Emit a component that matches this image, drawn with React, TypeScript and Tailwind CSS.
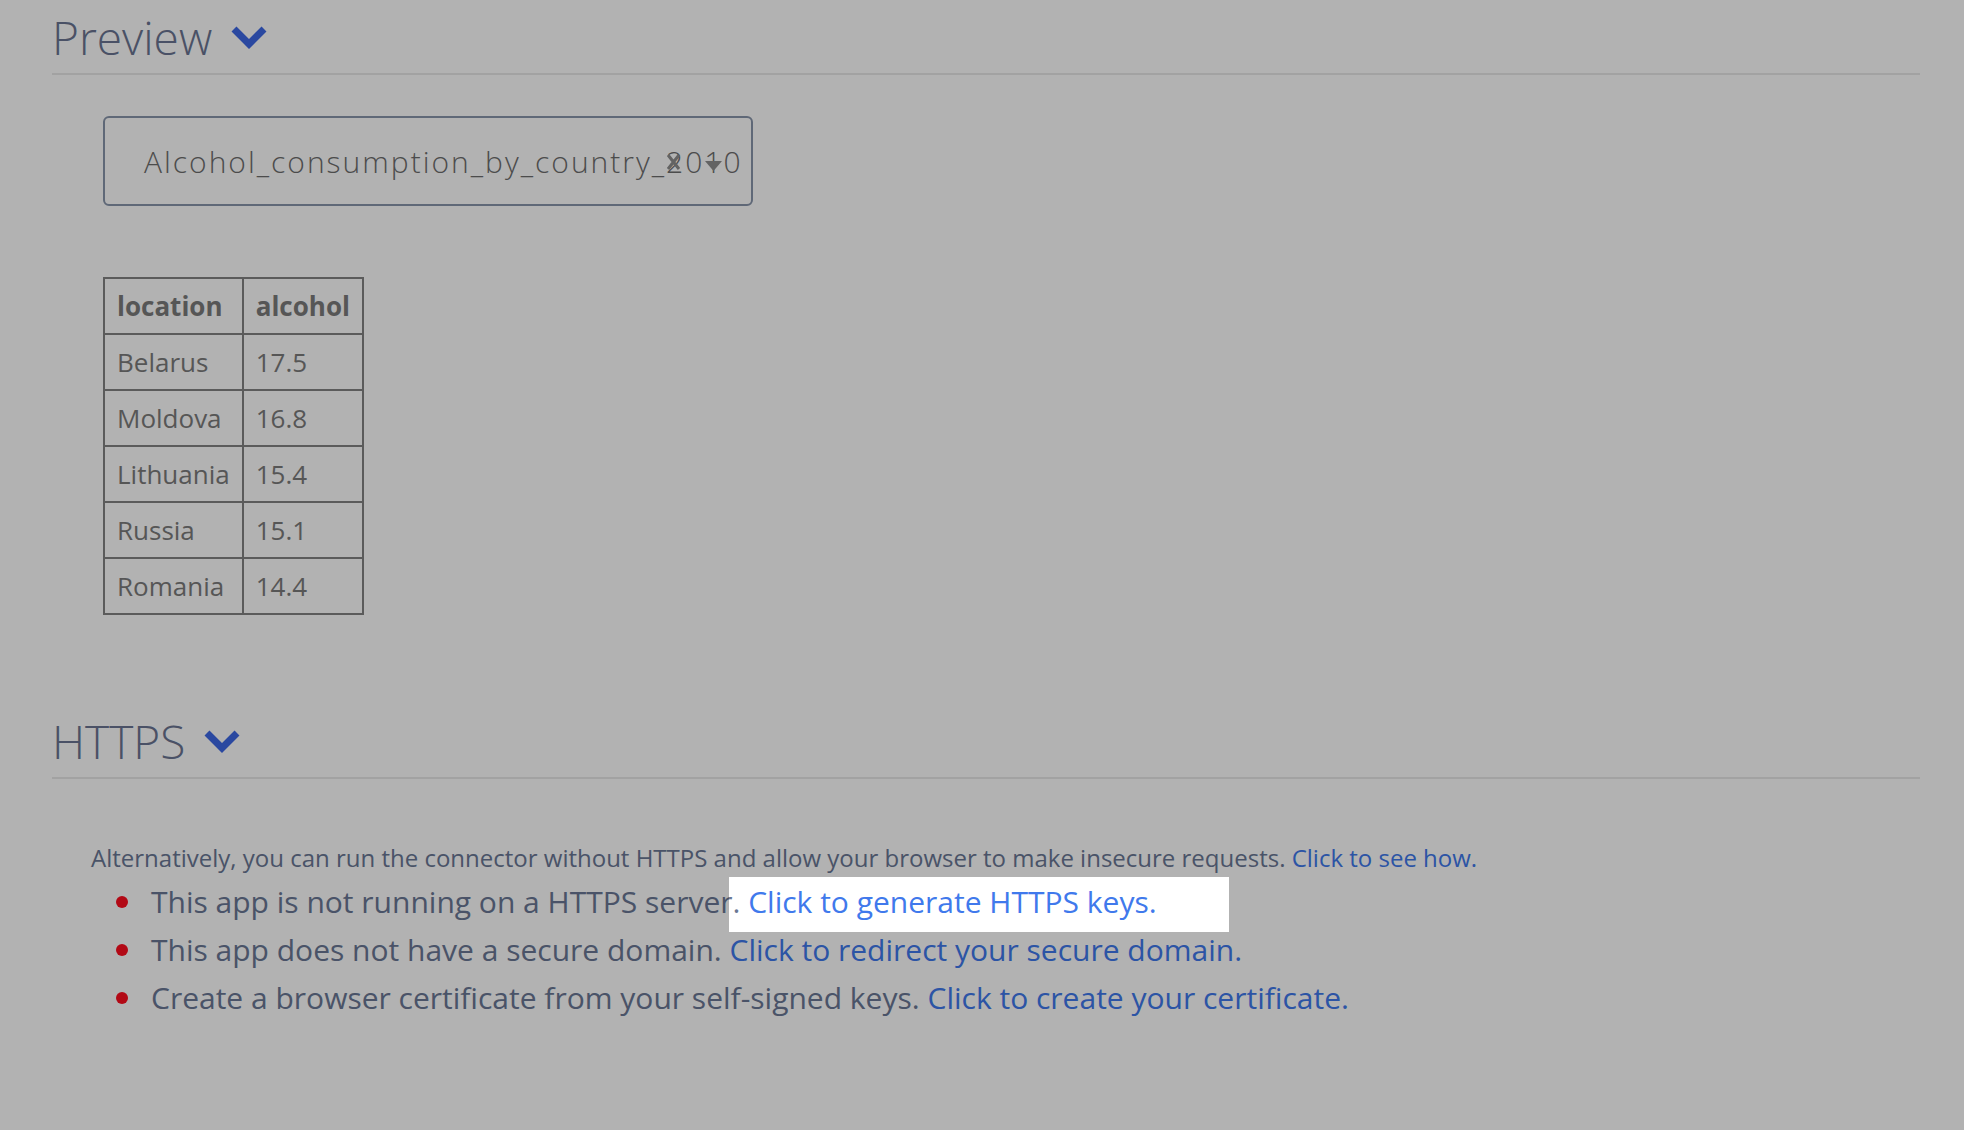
import React from "react";

const rows = [
  ["Belarus", "17.5"],
  ["Moldova", "16.8"],
  ["Lithuania", "15.4"],
  ["Russia", "15.1"],
  ["Romania", "14.4"],
];

const Chevron = () => (
  <svg width="36" height="24" viewBox="0 0 36 24" className="shrink-0">
    <polyline
      points="3,4 18,19 33,4"
      fill="none"
      stroke="#3d67e5"
      strokeWidth="7"
      strokeLinejoin="miter"
    />
  </svg>
);

const SectionTitle = ({ title }: { title: string }) => (
  <div className="border-b-2 border-[#e9e9e9] pb-[12px]">
    <h2 className="flex items-center gap-[19px] text-[46px] font-light leading-[48px] text-[#6a7592]">
      {title}
      <Chevron />
    </h2>
  </div>
);

const App = () => {
  return (
    <div className="min-h-[1130px] bg-white font-['Open_Sans',sans-serif] pl-[52px] pr-[44px] pt-[13px]">
      <SectionTitle title="Preview" />

      <div className="pl-[51px] pt-[41px]">
        <div className="relative h-[90px] w-[650px] rounded-[6px] border-2 border-[#8895ab] pl-[39px] flex items-center overflow-hidden">
          <span className="whitespace-nowrap text-[30px] font-light tracking-[2px] text-[#6e6e6e]">
            Alcohol_consumption_by_country_2010
          </span>
          <svg
            className="absolute left-[561px] top-[35px]"
            width="15"
            height="18"
            viewBox="0 0 15 18"
          >
            <path d="M2 2 L13 16 M13 2 L2 16" stroke="#8e8e8e" strokeWidth="3" />
          </svg>
          <svg
            className="absolute left-[600px] top-[43px]"
            width="17"
            height="10"
            viewBox="0 0 17 10"
          >
            <polygon points="0,0 17,0 8.5,10" fill="#8e8e8e" />
          </svg>
        </div>

        <table className="mt-[71px] border-collapse text-[26px] text-[#7c7c7c]">
          <thead>
            <tr>
              <th className="h-[56px] border-2 border-[#838383] px-[12px] text-left font-bold">
                location
              </th>
              <th className="h-[56px] border-2 border-[#838383] px-[12px] text-left font-bold">
                alcohol
              </th>
            </tr>
          </thead>
          <tbody>
            {rows.map((r) => (
              <tr key={r[0]}>
                <td className="h-[56px] border-2 border-[#838383] px-[12px]">{r[0]}</td>
                <td className="h-[56px] border-2 border-[#838383] px-[12px]">{r[1]}</td>
              </tr>
            ))}
          </tbody>
        </table>
      </div>

      <div className="pt-[102px]">
        <SectionTitle title="HTTPS" />
      </div>

      <div className="pl-[39px] pt-[63px] text-[#6a7895]">
        <p className="text-[24px] leading-[32px]">
          Alternatively, you can run the connector without HTTPS and allow your browser to make
          insecure requests. <a className="text-[#4079ec]">Click to see how.</a>
        </p>
        <ul className="mt-[4px] text-[30px] leading-[48px]">
          <li className="flex items-center">
            <span className="ml-[25px] mr-[23px] h-[12px] w-[12px] rounded-full bg-[#ff0d1f]" />
            <span>
              This app is not running on a HTTPS server.{" "}
              <a className="relative text-[#4079ec]">
                <span className="pointer-events-none absolute left-[-19px] top-[-4px] z-10 h-[55px] w-[500px] shadow-[0_0_0_4000px_rgba(0,0,0,0.3)]" />
                Click to generate HTTPS keys.
              </a>
            </span>
          </li>
          <li className="flex items-center">
            <span className="ml-[25px] mr-[23px] h-[12px] w-[12px] rounded-full bg-[#ff0d1f]" />
            <span>
              This app does not have a secure domain.{" "}
              <a className="text-[#4079ec]">Click to redirect your secure domain.</a>
            </span>
          </li>
          <li className="flex items-center">
            <span className="ml-[25px] mr-[23px] h-[12px] w-[12px] rounded-full bg-[#ff0d1f]" />
            <span>
              Create a browser certificate from your self-signed keys.{" "}
              <a className="text-[#4079ec]">Click to create your certificate.</a>
            </span>
          </li>
        </ul>
      </div>
    </div>
  );
};

export default App;
